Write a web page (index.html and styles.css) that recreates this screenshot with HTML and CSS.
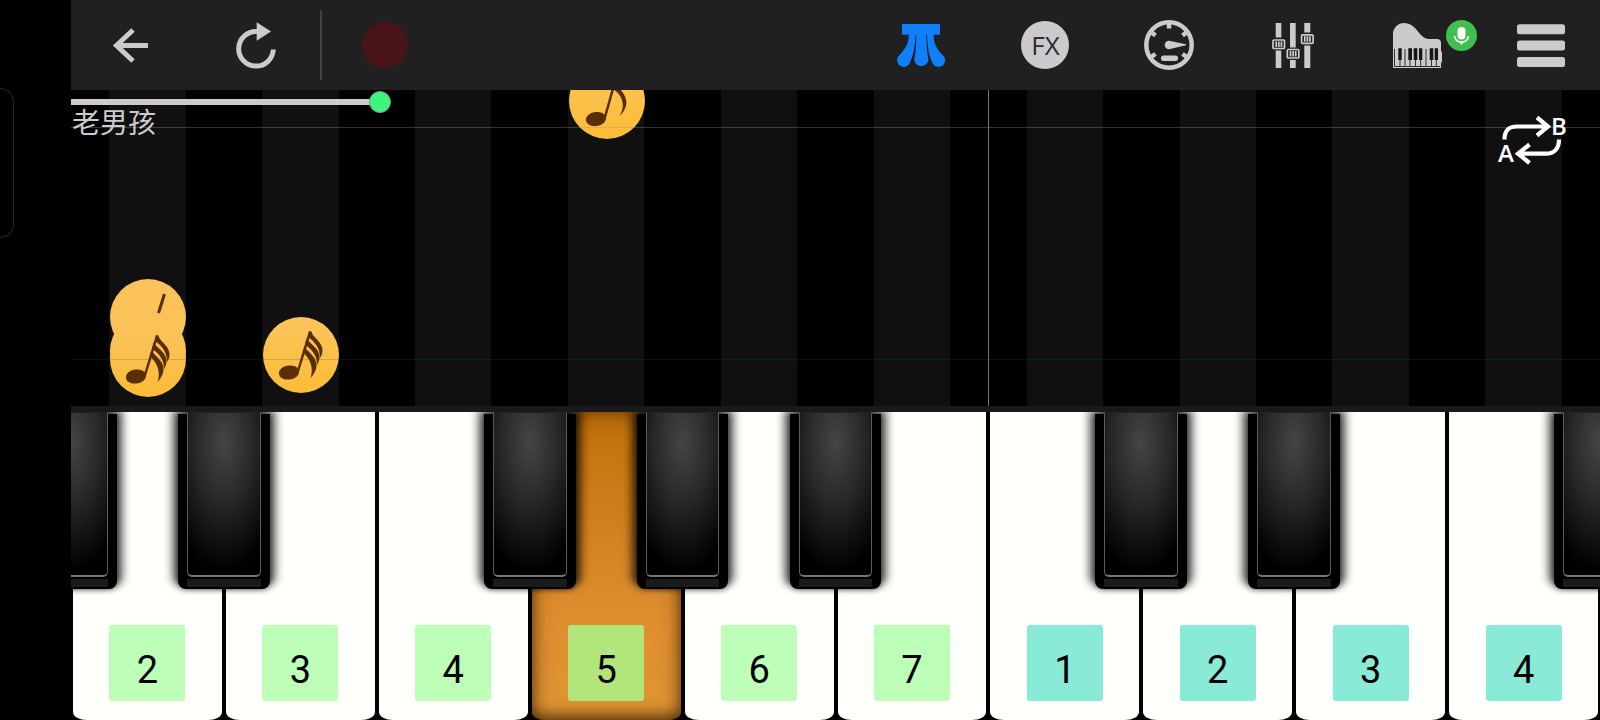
FILE: index.html
```html
<!DOCTYPE html>
<html lang="zh-CN">
<head>
<meta charset="utf-8">
<meta name="viewport" content="width=device-width, initial-scale=1">
<title>老男孩</title>
<link rel="stylesheet" href="styles.css">
</head>
<body>
<div class="screen">
  <aside class="edge"><div class="edge-handle"></div></aside>
  <main class="app">
    <header class="toolbar">
      <div class="tools tools-left">
        <button class="tool" type="button" aria-label="Back">
          <svg class="icon" viewBox="0 0 48 48"><path class="line" stroke-width="5" d="M42 24.500H11M27 9 10.500 24.500 27 40"/></svg>
        </button>
        <button class="tool tool-reload" type="button" aria-label="Restart">
          <svg class="icon" viewBox="0 0 48 48"><path class="line" stroke-width="5" d="M25 10.500A17.300 17.300 0 1 0 41.300 28.500"/><path d="M24.700 1.300 39 10.500 24.700 19.700Z"/></svg>
        </button>
        <span class="separator"></span>
        <button class="tool record" type="button" aria-label="Record"></button>
      </div>
      <div class="tools tools-right">
        <button class="tool waterfall" type="button" aria-label="Waterfall">
          <svg class="icon" viewBox="0 0 48 48"><path d="M5 3H43V13.700H36.500C37 24 40 28 47 35.500A6.300 6.300 0 1 1 36 43C32 35 30.500 27 30 13.700H29.300C29.500 25 30 31 31.500 38A7 7 0 1 1 17.200 38C19 31 19.200 25 19.200 13.700H18.500C18 27 16 35 12.300 43A6.300 6.300 0 1 1 1.200 35.500C8 28 11.500 24 12 13.700H5Z"/></svg>
        </button>
        <button class="tool" type="button" aria-label="Effects">
          <svg class="icon" viewBox="0 0 48 48"><circle cx="24" cy="24" r="24"/><text class="fx" x="24.500" y="34" text-anchor="middle">FX</text></svg>
        </button>
        <button class="tool" type="button" aria-label="Tempo">
          <svg class="icon" viewBox="0 0 48 48"><circle class="line" stroke-width="4.500" cx="24" cy="24" r="22.700"/><path class="line" stroke-width="4.500" d="M24 2V7.500M6 11 10.500 14.500M42 11 37.500 14.500M6 36 10.500 33M42 36 37.500 33"/><path d="M24 19.700 41 23.300V24.300L24 28.300A4.300 4.300 0 0 1 24 19.700Z"/><rect x="16" y="34.500" width="17" height="5.500" rx="2.500"/></svg>
        </button>
        <button class="tool" type="button" aria-label="Mixer">
          <svg class="icon" viewBox="0 0 48 48"><path d="M6.700 2H12.300V16.500H6.700ZM6.700 29.500H12.300V47H6.700ZM21 2H26.700V26.500H21ZM21 39H26.700V47H21ZM35.300 2H41.300V11.500H35.300ZM35.300 24.500H41.300V47H35.300Z"/><g class="line" stroke-width="1.700"><rect x="4" y="19" width="11.500" height="8.500" rx="1"/><path d="M7.200 20.500V26M9.800 20.500V26M12.400 20.500V26"/><rect x="18.300" y="28.500" width="11.500" height="8.500" rx="1"/><path d="M21.500 30V35.500M24.100 30V35.500M26.700 30V35.500"/><rect x="32.600" y="13.800" width="11.500" height="8.500" rx="1"/><path d="M35.800 15.300V20.800M38.400 15.300V20.800M41 15.300V20.800"/></g></svg>
        </button>
        <button class="tool instrument" type="button" aria-label="Instrument">
          <svg class="icon" viewBox="0 0 48 48"><path d="M0 47V11C2 5 6 2 11 2 24 2 26 18 36 18H44Q48 18 48 22V30L49 31V41L48 42V47Z"/><path class="ink" d="M5.300 27.300H8.700V39H5.300ZM15.300 27.300H19V39H15.300ZM20.700 27.300H24.300V39H20.700ZM26 27.300H29.300V39H26ZM36.700 27.300H40.300V39H36.700ZM41.700 27.300H45V39H41.700Z"/><path class="ink-line" d="M1.500 28V45.500H47M7 38V45M12 28V45M17 38V45M22.500 38V45M27.700 38V45M33 28V45M38.500 38V45M43.300 38V45"/></svg>
          <span class="badge"><svg class="badge-icon" viewBox="0 0 31 31"><rect x="11.500" y="7" width="8" height="12.500" rx="4"/><path class="line" stroke-width="1.800" d="M8.500 16C9.500 24 21.500 24 22.500 16M15.500 22V24.500"/></svg></span>
        </button>
        <button class="tool" type="button" aria-label="Menu">
          <svg class="icon" viewBox="0 0 48 48"><rect y="3.300" width="48" height="10" rx="2.500"/><rect y="19.600" width="48" height="10" rx="2.500"/><rect y="36" width="48" height="10" rx="2.500"/></svg>
        </button>
      </div>
    </header>

    <section class="lanes">
      <div class="note note-upper"><svg class="note-icon" viewBox="0 0 76 76"><path class="stem stem-bold" d="M54.500 15 48.500 34"/></svg></div>
      <div class="note note-middle"></div>
      <div class="note note-lower"><svg class="note-icon" viewBox="0 0 76 76"><use href="#sixty-fourth"/></svg></div>
      <div class="note note-third"><svg class="note-icon" viewBox="0 0 76 76"><g id="sixty-fourth"><ellipse cx="26" cy="55.500" rx="10.200" ry="7" transform="rotate(-8 26 55.500)"/><path class="stem" d="M35 54 47 15"/><path d="M46 14 48.500 14.500C49 20 59 24 59.500 33Q60 37 57 41C57.500 31 51 24 45 20ZM43.500 21.500C46 26 56 31 56.500 39Q57 43 54 48C54.500 38 48 32 42 27.500ZM41.500 29C43 34 52.500 38 53.500 47Q54 54 47.500 61C51 51 47 41 39.500 35Z"/></g></svg></div>
      <div class="note note-playing"><svg class="note-icon" viewBox="0 0 76 76"><ellipse cx="27" cy="56" rx="10.200" ry="7" transform="rotate(-8 27 56)"/><path class="stem" d="M36 54 47 15"/><path d="M47 15C46 25 57 28 57.500 40Q57 47 50.500 53C56 44 55 33 44 26Z"/></svg></div>
      <div class="beat beat-bar"></div>
      <div class="beat beat-hit"></div>
      <div class="octave-line"></div>
      <div class="song">
        <input class="progress" type="range" min="0" max="1000" value="198" aria-label="Playback position">
        <h1 class="song-title">老男孩</h1>
      </div>
      <button class="loop" type="button" aria-label="Loop A to B">
        <svg class="loop-icon" viewBox="0 0 68 50"><path class="line" stroke-width="4.200" d="M6.500 24.500C6.500 15 11 11.500 19 11.500H50M39 2.500 50 11.500 39 20.500M61 24.500C61 34 56 38.700 48 38.700H20M31.500 29.500 20 38.700 31.500 48"/><text class="loop-text" x="0" y="47">A</text><text class="loop-text" x="53" y="20">B</text></svg>
      </button>
    </section>

    <section class="piano" aria-label="Piano">
      <div class="slot"><button class="key" type="button"><span class="label">2</span></button><button class="black black-before" type="button" aria-label="1 sharp"></button><button class="black" type="button" aria-label="2 sharp"></button></div>
      <div class="slot"><button class="key" type="button"><span class="label">3</span></button></div>
      <div class="slot"><button class="key" type="button"><span class="label">4</span></button><button class="black" type="button" aria-label="4 sharp"></button></div>
      <div class="slot"><button class="key key-pressed" type="button"><span class="label">5</span></button><button class="black" type="button" aria-label="5 sharp"></button></div>
      <div class="slot"><button class="key" type="button"><span class="label">6</span></button><button class="black" type="button" aria-label="6 sharp"></button></div>
      <div class="slot"><button class="key" type="button"><span class="label">7</span></button></div>
      <div class="slot"><button class="key key-high" type="button"><span class="label">1</span></button><button class="black" type="button" aria-label="High 1 sharp"></button></div>
      <div class="slot"><button class="key key-high" type="button"><span class="label">2</span></button><button class="black" type="button" aria-label="High 2 sharp"></button></div>
      <div class="slot"><button class="key key-high" type="button"><span class="label">3</span></button></div>
      <div class="slot"><button class="key key-high" type="button"><span class="label">4</span></button><button class="black" type="button" aria-label="High 4 sharp"></button></div>
    </section>
  </main>
</div>
</body>
</html>
```

FILE: styles.css
```css
* {
  box-sizing: border-box;
}

body {
  margin: 0;
  background: #000;
  color: #ccc;
  font-family: Roboto, "Noto Sans CJK SC", sans-serif;
}

button {
  margin: 0;
  padding: 0;
  border: 0;
  background: none;
  color: inherit;
  font: inherit;
  cursor: pointer;
}

svg {
  display: block;
  overflow: visible;
  fill: currentColor;
}

.line {
  fill: none;
  stroke: currentColor;
}

.screen {
  display: flex;
  min-height: 100vh;
}

.edge {
  flex: 0 0 71px;
  padding-top: 88px;
}

.edge-handle {
  width: 14px;
  height: 150px;
  border: 1px solid #25290c;
  border-left: 0;
  border-radius: 0 14px 14px 0;
}

.app {
  flex: 1;
  min-width: 0;
  display: flex;
  flex-direction: column;
}

/* Toolbar */
.toolbar {
  display: flex;
  align-items: center;
  justify-content: space-between;
  height: 90px;
  padding: 0 35px;
  background: #202021;
  color: #cbcacd;
}

.tools {
  display: flex;
  align-items: center;
}

.tools-left {
  gap: 40px;
}

.tools-right {
  gap: 76px;
}

.tool {
  position: relative;
  width: 48px;
  height: 48px;
}

.tool-reload {
  margin-left: 38px;
}

.icon {
  width: 48px;
  height: 48px;
}

.separator {
  width: 2px;
  height: 70px;
  background: #434344;
}

.record {
  width: 46px;
  height: 46px;
  border-radius: 50%;
  background: #4a1317;
}

.waterfall {
  color: #0f7ffb;
}

.fx {
  fill: #2c2c2e;
  font-family: "Open Sans", sans-serif;
  font-size: 26px;
}

.ink {
  fill: #151516;
}

.ink-line {
  fill: none;
  stroke: #303032;
  stroke-width: 1;
}

.badge {
  position: absolute;
  top: -1px;
  left: 53px;
  width: 31px;
  height: 31px;
  border-radius: 50%;
  background: #3fbf50;
  color: #fff;
}

/* Falling notes */
.lanes {
  position: relative;
  flex: 1;
  min-height: 200px;
  overflow: hidden;
  background: repeating-linear-gradient(90deg, #000 0 2.5%, #101011 2.5% 7.5%, #000 7.5% 10%);
}

.note {
  position: absolute;
  width: 76px;
  height: 76px;
  margin-left: -37px;
  border-radius: 50%;
  background: linear-gradient(#fac55c, #fdbc35);
  color: #5a2e00;
}

.note-icon {
  width: 76px;
  height: 76px;
}

.stem {
  fill: none;
  stroke: currentColor;
  stroke-width: 2.5;
}

.stem-bold {
  stroke-width: 3;
}

.note-upper {
  left: 5%;
  top: 189px;
  background: #fac258;
}

.note-middle {
  left: 5%;
  top: 223px;
  background: #fac257;
}

.note-lower {
  left: 5%;
  top: 231px;
  background: linear-gradient(#fac257 20%, #fdbc35);
}

.note-third {
  left: 15%;
  top: 227px;
}

.note-playing {
  left: 35%;
  top: -27px;
}

.beat {
  position: absolute;
  left: 0;
  right: 0;
  height: 1px;
}

.beat-bar {
  top: 37px;
  background: rgba(150, 150, 150, 0.35);
}

.beat-hit {
  top: 269px;
  background: rgba(0, 90, 130, 0.2);
}

.octave-line {
  position: absolute;
  top: 0;
  bottom: 0;
  left: 60%;
  width: 1px;
  background: #737373;
}

.song {
  position: relative;
}

.progress {
  display: block;
  width: 100%;
  height: 24px;
  margin: 0;
  appearance: none;
  background: linear-gradient(90deg, #cfcbcd 20%, transparent 20%) center / 100% 6px no-repeat;
}

.progress::-webkit-slider-thumb {
  appearance: none;
  width: 22px;
  height: 22px;
  border: 1px solid #7f9f88;
  border-radius: 50%;
  background: #3df57d;
}

.song-title {
  margin: 0;
  padding: 0 1px;
  color: #ccc;
  font-family: "Noto Sans CJK SC", sans-serif;
  font-size: 28px;
  font-weight: 400;
  line-height: 14px;
}

.loop {
  position: absolute;
  top: 25px;
  right: 34px;
  color: #fff;
}

.loop-icon {
  width: 68px;
  height: 50px;
}

.loop-text {
  font-family: "Open Sans", sans-serif;
  font-size: 24px;
  font-weight: 600;
}

/* Keyboard */
.piano {
  display: flex;
  overflow: hidden;
  border-top: 6px solid #19191a;
  background: #000;
}

.slot {
  position: relative;
  flex: 1;
  padding: 0 2px;
}

.key {
  display: flex;
  justify-content: center;
  width: 100%;
  padding: 213px 0 19px;
  border-radius: 0 0 14px 14px / 0 0 8px 8px;
  background: #fffffb;
  color: #000;
}

.key-pressed {
  background: linear-gradient(#bf6f0b, #e08f30 68%, #df9535);
  box-shadow: inset 0 -4px 12px rgba(50, 25, 0, 0.6), inset 0 0 22px rgba(50, 25, 0, 0.5);
}

.label {
  display: flex;
  align-items: center;
  justify-content: center;
  width: 76px;
  height: 76px;
  padding-top: 14px;
  border-radius: 3px;
  background: #bdffb8;
  font-size: 38px;
  line-height: 44px;
}

.key-high .label {
  background: #8aead8;
}

.key-pressed .label {
  background: #b3e67a;
}

.black {
  position: absolute;
  z-index: 1;
  top: 2px;
  left: 70%;
  width: 60%;
  height: 175px;
  padding: 0 9px;
  border-radius: 0 0 8px 8px;
  background: #000;
  box-shadow: 6px -4px 9px rgba(0, 0, 0, 0.6), -6px -4px 9px rgba(0, 0, 0, 0.6), 0 0 6px rgba(0, 0, 0, 0.6);
}

.black-before {
  left: -30%;
}

.black::before {
  content: "";
  display: block;
  height: 162px;
  margin-top: -5px;
  border: 1px solid #5c5c5e;
  border-top-color: #222;
  border-bottom: 2px solid #777;
  border-radius: 0 0 5px 5px;
  background: radial-gradient(ellipse 85% 80% at 50% 18%, #454447, #29292b 45%, #000);
}

.black::after {
  content: "";
  display: block;
  height: 8px;
  margin-top: 2px;
  background: #1b1b1d;
}
```
